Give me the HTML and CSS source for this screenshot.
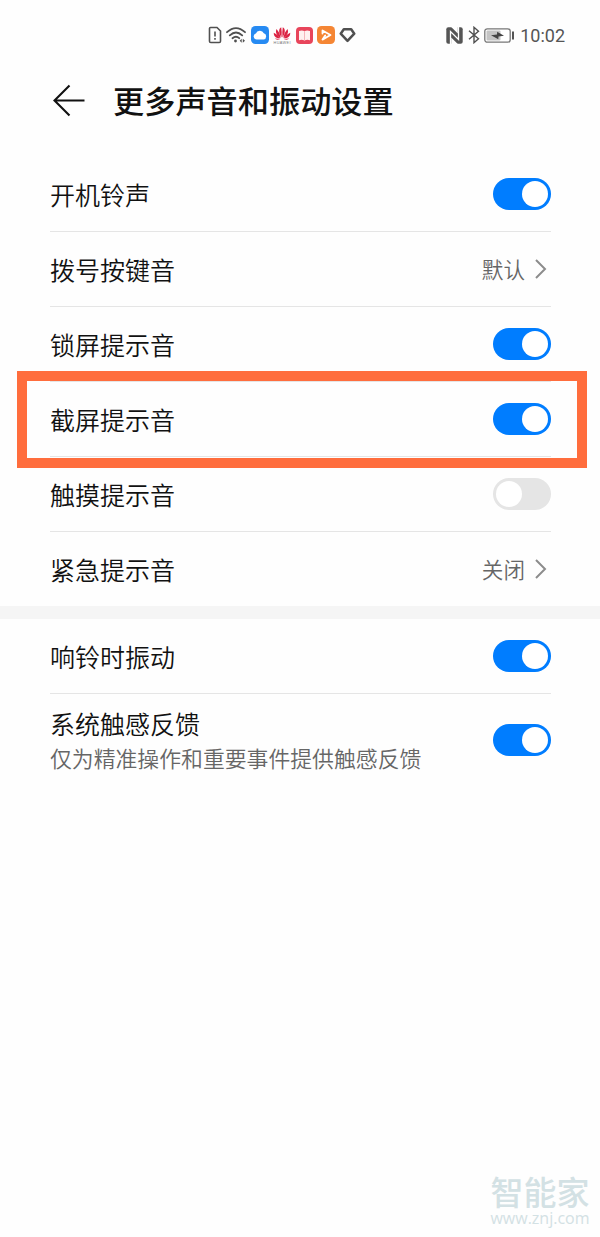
FILE: index.html
```html
<!DOCTYPE html>
<html lang="zh-CN">
<head>
  <meta charset="UTF-8" />
  <meta name="viewport" content="width=device-width, initial-scale=1.0"/>
  <title>更多声音和振动设置</title>
  <link rel="stylesheet" href="styles.css">
</head>
<body>
  <div class="status-bar">
    <div class="status-apps">
      <svg width="14" height="18" viewBox="0 0 14 18" fill="none" stroke="#505050" stroke-width="1.6">
        <path d="M2.5 1.5H9L12.5 5V15.2Q12.5 16.5 11.2 16.5H2.8Q1.5 16.5 1.5 15.2V2.5Q1.5 1.5 2.5 1.5Z"/>
        <path d="M7 5.5V10.5M7 12V13.8"/>
      </svg>
      <svg width="20" height="18" viewBox="0 0 20 18" fill="none" stroke="#505050" stroke-width="1.8" stroke-linecap="round">
        <path d="M1 6.2Q10 -2 19 6.2M3.8 9.3Q10 3.7 16.2 9.3M6.5 12.2Q10 9.2 13.2 12.2"/>
        <circle cx="9.5" cy="15" r="1.4" fill="#505050" stroke="none"/>
        <path d="M15.7 12.7L13.7 14.7L15.7 16.7ZM16.8 12.7L19 14.7L16.8 16.7Z" fill="#505050" stroke="none"/>
      </svg>
      <svg width="18" height="18" viewBox="0 0 18 18">
        <rect width="18" height="18" rx="4.5" fill="#268af2"/>
        <path d="M5.5 13.5A3 3 0 0 1 4.9 7.6A4.2 4.2 0 0 1 12.8 7.3A3.2 3.2 0 0 1 12.7 13.5Z" fill="#fff"/>
      </svg>
      <svg width="18" height="18" viewBox="0 0 18 18" fill="#dc2444">
        <path d="M8.5 11.5C5.5 7 5.4 2.5 8.2 1.2Q9 5 8.5 11.5ZM9.5 11.5C12.5 7 12.6 2.5 9.8 1.2Q9 5 9.5 11.5Z"/>
        <path d="M7.8 11.8C3.5 9.5 2 6 3.6 3Q6.5 6 7.8 11.8ZM10.2 11.8C14.5 9.5 16 6 14.4 3Q11.5 6 10.2 11.8Z"/>
        <path d="M7.4 12.3C3 12.5 .5 10 .8 6.7Q5 8.4 7.4 12.3ZM10.6 12.3C15 12.5 17.5 10 17.2 6.7Q13 8.4 10.6 12.3Z"/>
        <path d="M7.2 12.9Q3.8 14.5 1.8 12.6ZM10.8 12.9Q14.2 14.5 16.2 12.6Z"/>
        <text class="brand" x="0.5" y="17.8" textLength="17">HUAWEI</text>
      </svg>
      <svg width="17" height="17" viewBox="0 0 17 17">
        <rect width="17" height="17" rx="4" fill="#e8455b"/>
        <path d="M3 4Q6 2.8 8.5 4.2Q11 2.8 14 4V13.2Q11 12.3 8.5 13.5Q6 12.3 3 13.2Z" fill="#fff0f0"/>
        <path d="M8.5 4.2V13.5" stroke="#f2a4ad" stroke-width=".8"/>
      </svg>
      <svg width="18" height="18" viewBox="0 0 18 18">
        <rect width="18" height="18" rx="4.5" fill="#f58634"/>
        <path d="M5.5 7.5V4.5L13.5 9L5.5 13.6L8.2 9.5" fill="none" stroke="#fff" stroke-width="1.8" stroke-linejoin="round" stroke-linecap="round"/>
      </svg>
      <svg width="17" height="16" viewBox="0 0 17 16">
        <path d="M4.8 2.2H12.2L15.3 6.7L8.5 13.9L1.7 6.7Z" fill="none" stroke="#505050" stroke-width="2.5" stroke-linejoin="round"/>
      </svg>
    </div>
    <div class="status-system">
      <svg width="17" height="17" viewBox="0 0 17 17">
        <rect x=".3" y=".3" width="16.4" height="16.4" rx="2" fill="#555"/>
        <path d="M4.5 17V4.5L12.5 12.5V0" fill="none" stroke="#fff" stroke-width="1.3"/>
        <path d="M5.2 0L11.8 6.5V0ZM5.2 17V10.5L11.8 17Z" fill="#fff"/>
      </svg>
      <svg width="12" height="18" viewBox="0 0 12 18">
        <path d="M1 4.8L10.5 12.8L6 16.7V1.3L10.5 5.2L1 13.2" fill="none" stroke="#505050" stroke-width="1.4"/>
      </svg>
      <svg width="31" height="15" viewBox="0 0 31 15">
        <rect x=".8" y=".8" width="25.4" height="13.4" rx="2.5" fill="#fff" stroke="#777" stroke-width="1.3"/>
        <rect x="2.5" y="2.5" width="14" height="10" rx="1" fill="#c4c4c4"/>
        <path d="M7 7.3L13 6.5L13.2 3.7L20 7.8L14.5 8.5L14.3 11.3Z" fill="#444"/>
        <path d="M29 3.5V11.5" stroke="#555" stroke-width="2"/>
      </svg>
      <span class="clock">10:02</span>
    </div>
  </div>

  <header>
    <svg width="34" height="34" viewBox="0 0 34 34" fill="none" stroke="#111" stroke-width="2.1">
      <path d="M18.5 1.5L3.5 16.5L18.5 31.5M3.5 16.5H33.5"/>
    </svg>
    <h1>更多声音和振动设置</h1>
  </header>

  <section class="group">
    <div class="row">
      <span class="label">开机铃声</span>
      <span class="switch on"></span>
    </div>
    <div class="row">
      <span class="label">拨号按键音</span>
      <span class="value">默认</span>
      <svg class="chevron" width="14" height="22" viewBox="0 0 14 22"><path d="M2 2L11 11L2 20"/></svg>
    </div>
    <div class="row">
      <span class="label">锁屏提示音</span>
      <span class="switch on"></span>
    </div>
    <div class="row highlighted">
      <span class="label">截屏提示音</span>
      <span class="switch on"></span>
    </div>
    <div class="row">
      <span class="label">触摸提示音</span>
      <span class="switch"></span>
    </div>
    <div class="row">
      <span class="label">紧急提示音</span>
      <span class="value">关闭</span>
      <svg class="chevron" width="14" height="22" viewBox="0 0 14 22"><path d="M2 2L11 11L2 20"/></svg>
    </div>
  </section>

  <section class="group second">
    <div class="row">
      <span class="label">响铃时振动</span>
      <span class="switch on"></span>
    </div>
    <div class="row tall">
      <div class="label">
        <div>系统触感反馈</div>
        <p>仅为精准操作和重要事件提供触感反馈</p>
      </div>
      <span class="switch on"></span>
    </div>
  </section>

  <footer>
    <div class="site-name">智能家</div>
    <div class="site-url">www.znj.com</div>
  </footer>
</body>
</html>
```

FILE: styles.css
```css
*, *::after {
  box-sizing: border-box;
}
body {
  font-family: 'Noto Sans CJK SC', sans-serif;
  margin: 0;
  height: 1237px;
  display: flex;
  flex-direction: column;
  background: #fefefe;
  color: #111;
}
svg {
  display: block;
  flex-shrink: 0;
}
.status-bar {
  display: flex;
  justify-content: space-between;
  height: 70px;
  padding: 0 35px 0 208px;
}
.status-apps, .status-system {
  display: flex;
  align-items: center;
  height: 70px;
}
.status-apps {
  gap: 4.4px;
}
.status-system {
  gap: 4.8px;
}
.brand {
  font-family: 'Liberation Sans', sans-serif;
  font-size: 3.8px;
  fill: #777;
}
.clock {
  padding-top: 1px;
  font-family: Roboto, sans-serif;
  font-size: 18px;
  line-height: 22px;
  color: #555;
}
header {
  display: flex;
  align-items: center;
  height: 87px;
  padding: 0 51px 26px;
}
h1 {
  margin: -2px 0 0 28px;
  font-size: 31.2px;
  line-height: 40px;
  font-weight: 500;
}
.group {
  padding: 0 49px 0 50px;
}
.second {
  border-top: 13px solid #f5f5f5;
}
.row {
  position: relative;
  display: flex;
  align-items: center;
  height: 75px;
  border-bottom: 1px solid #e5e5e5;
}
.row:last-child {
  height: 74px;
  border-bottom: none;
}
.label {
  flex: 1;
  font-size: 25px;
  line-height: 36px;
  font-weight: 350;
}
.label p {
  margin: 0;
  font-size: 21.85px;
  line-height: 33px;
  color: #666;
}
.row.tall {
  height: 91px;
}
.value {
  margin: -2px 9px 0 0;
  font-size: 21.6px;
  font-weight: 350;
  color: #666;
}
.chevron {
  margin-right: 3px;
  fill: none;
  stroke: #8c8c8c;
  stroke-width: 2;
}
.switch {
  width: 58px;
  height: 32px;
  padding: 3px;
  border-radius: 16px;
  background: #e5e5e5;
}
.switch::after {
  content: "";
  display: block;
  width: 26px;
  height: 26px;
  border-radius: 50%;
  background: #fff;
}
.switch.on {
  background: #007dff;
}
.switch.on::after {
  margin-left: auto;
}
/* frame drawn over the neighbouring rows */
.highlighted::after {
  content: "";
  position: absolute;
  z-index: 1;
  top: -11px;
  left: -33px;
  width: 570px;
  height: 97px;
  border: 10px solid #ff6d3d;
}
footer {
  width: 102px;
  margin: auto 9px 9px auto;
  color: #d3e1e4;
  text-align: center;
}
.site-name {
  font-size: 33px;
  line-height: 34px;
  font-weight: 500;
}
.site-url {
  font-family: 'Open Sans', sans-serif;
  font-size: 16px;
  line-height: 20px;
}
```
